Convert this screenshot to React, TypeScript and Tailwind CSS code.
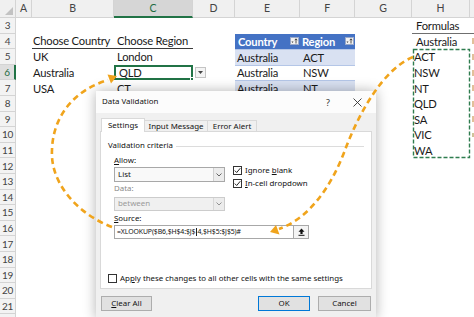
import React from 'react';

const W = ['w-[16px]', 'w-[16px]', 'w-[82px]', 'w-[79px]', 'w-[42px]', 'w-[65px]', 'w-[55px]', 'w-[57px]', 'w-[58px]', 'w-[10px]'];
const LETTERS = ['', 'A', 'B', 'C', 'D', 'E', 'F', 'G', 'H', ''];
const H_LIST: Record<number, string> = { 4: 'Australia', 5: 'ACT', 6: 'NSW', 7: 'NT', 8: 'QLD', 9: 'SA', 10: 'VIC', 11: 'WA' };
const ROWS = [3, 4, 5, 6, 7, 8, 9, 10, 11, 12, 13, 14, 15, 16, 17, 18, 19, 20, 21, 22];

function Cell({ i, className = '', children }: { i: number; className?: string; children?: React.ReactNode }) {
  return <div className={`${W[i]} shrink-0 h-full flex items-center whitespace-nowrap overflow-visible ${className}`}>{children}</div>;
}

function FilterBtn() {
  return (
    <div className="w-[9px] h-[8px] bg-[#f2f2f2] border border-[#9aa9c9] flex items-center justify-center">
      <svg width="7" height="6" viewBox="0 0 7 6">
        <path d="M0.5 3.5 L2.5 3.5 L1.5 5 Z" fill="#3a3a3a" />
        <path d="M5 5.5 L5 1 M3.8 2.2 L5 0.8 L6.2 2.2" stroke="#3a3a3a" strokeWidth="0.9" fill="none" />
      </svg>
    </div>
  );
}

function sheetRow(n: number) {
  const band = n === 5 || n === 7;
  const tableCell = band ? 'bg-[#d9e1f2] border-t border-[#b4c6e7]' : 'bg-white border-t border-[#b4c6e7]';
  return (
    <div key={n} className="flex h-[15.6px]">
      <div
        className={`${W[0]} shrink-0 h-full flex items-center justify-center text-[10px] border-b border-[#d4d4d4] ${
          n === 6 ? 'bg-[#dedede] text-[#1e6b3f] border-r-2 border-r-[#217346]' : 'bg-[#f3f3f3] text-[#444] border-r border-r-[#d4d4d4]'
        }`}
      >
        {n < 22 ? n : ''}
      </div>
      <Cell i={1} />
      <Cell i={2} className={`pl-[1px] ${n === 4 ? 'border-b border-[#3a3a3a]' : ''}`}>
        {n === 4 && 'Choose Country'}
        {n === 5 && 'UK'}
        {n === 6 && 'Australia'}
        {n === 7 && 'USA'}
      </Cell>
      <Cell
        i={3}
        className={`pl-[3px] relative ${n === 4 ? 'border-b border-[#3a3a3a]' : ''} ${
          n === 6 ? 'border-2 border-[#217346] pl-[1px]' : ''
        }`}
      >
        {n === 4 && 'Choose Region'}
        {n === 5 && 'London'}
        {n === 6 && 'QLD'}
        {n === 7 && 'CT'}
        {n === 6 && <div className="absolute right-[-3px] bottom-[-3px] w-[4px] h-[4px] bg-[#217346] border border-white" />}
      </Cell>
      <Cell i={4}>
        {n === 6 && (
          <div className="ml-[2px] w-[11px] h-[11px] bg-[#f4f4f4] border border-[#c4c4c4] flex items-center justify-center">
            <svg width="5" height="3" viewBox="0 0 5 3">
              <path d="M0 0 L5 0 L2.5 3 Z" fill="#444" />
            </svg>
          </div>
        )}
      </Cell>
      {n === 4 ? (
        <>
          <Cell i={5} className="bg-[#4472c4] text-white font-bold pl-[3px] pr-[1px] justify-between">
            <span>Country</span>
            <FilterBtn />
          </Cell>
          <Cell i={6} className="bg-[#4472c4] text-white font-bold pl-[2px] pr-[1px] justify-between">
            <span>Region</span>
            <FilterBtn />
          </Cell>
        </>
      ) : n >= 5 && n <= 7 ? (
        <>
          <Cell i={5} className={`pl-[2px] ${tableCell}`}>Australia</Cell>
          <Cell i={6} className={`pl-[3px] ${tableCell}`}>{n === 5 ? 'ACT' : n === 6 ? 'NSW' : 'NT'}</Cell>
        </>
      ) : (
        <>
          <Cell i={5} />
          <Cell i={6} />
        </>
      )}
      <Cell i={7} />
      <Cell i={8} className={`${n >= 5 ? 'pl-[2px]' : 'pl-[4px]'} ${n === 3 ? 'border-b border-[#6f6f6f]' : ''}`}>
        {n === 3 ? 'Formulas' : H_LIST[n]}
      </Cell>
      <Cell i={9} className={n === 3 ? 'border-b border-[#6f6f6f]' : ''}>
        {n >= 4 && n <= 9 && <div className="ml-[2px] w-[3px] h-[6px] bg-[#e2c09a]" />}
        {n === 10 && <div className="ml-[2px] w-[2px] h-[4px] bg-[#cfc39a]" />}
      </Cell>
    </div>
  );
}

function Sheet() {
  return (
    <div className="font-['Lato',sans-serif] text-[11.2px] tracking-[-0.2px] text-[#1a1a1a] leading-none">
      <div className="flex h-[18px]">
        {LETTERS.map((l, i) => (
          <div
            key={i}
            className={`${W[i]} shrink-0 h-full flex items-center justify-center text-[10.5px] border-r border-[#d4d4d4] ${
              i === 3
                ? 'bg-[#d6d6d6] text-[#1e6b3f] border-b-2 border-b-[#217346]'
                : 'bg-[#f0f0f0] text-[#444] border-b border-b-[#d4d4d4]'
            } ${i === 0 ? 'relative' : ''}`}
          >
            {i === 0 ? (
              <svg className="absolute right-[2px] bottom-[2px]" width="8" height="8" viewBox="0 0 8 8">
                <path d="M8 0 L8 8 L0 8 Z" fill="#c2c2c2" />
              </svg>
            ) : (
              l
            )}
          </div>
        ))}
      </div>
      {ROWS.map((n) => sheetRow(n))}
    </div>
  );
}

function Check({ on }: { on: boolean }) {
  return (
    <div className="w-[9px] h-[9px] border border-[#333] bg-white flex items-center justify-center shrink-0">
      {on && (
        <svg width="7" height="7" viewBox="0 0 7 7">
          <path d="M0.8 3.6 L2.7 5.5 L6.3 1.2" stroke="#222" strokeWidth="1" fill="none" />
        </svg>
      )}
    </div>
  );
}

function Chevron({ color = '#555' }: { color?: string }) {
  return (
    <svg width="6" height="4" viewBox="0 0 6 4">
      <path d="M0.5 0.5 L3 3 L5.5 0.5" stroke={color} strokeWidth="0.9" fill="none" />
    </svg>
  );
}

function Dialog() {
  return (
    <div className="absolute left-[96px] top-[91px] w-[280px] h-[228px] bg-[#f0f0f0] shadow-[0_0_12px_rgba(0,0,0,0.3)] font-['Noto_Sans',sans-serif] text-[7.9px] text-[#111] leading-none flex flex-col">
      <div className="h-[22px] bg-[#fcfcfc] flex items-center pl-[6px] shrink-0">
        <span>Data Validation</span>
        <span className="ml-auto text-[9px] text-[#333]">?</span>
        <svg className="ml-[23px] mr-[14px]" width="9" height="9" viewBox="0 0 9 9">
          <path d="M0.5 0.5 L8.5 8.5 M8.5 0.5 L0.5 8.5" stroke="#333" strokeWidth="0.9" />
        </svg>
      </div>
      <div className="mt-[5px] mx-[4px] flex items-end relative z-10 pl-[1px] h-[14px]">
        <div className="w-[44px] h-[14px] bg-white border border-b-0 border-[#d9d9d9] flex items-center justify-center">Settings</div>
        <div className="w-[63px] h-[12px] border border-l-0 border-b-0 border-[#d9d9d9] flex items-center justify-center">Input Message</div>
        <div className="w-[49px] h-[12px] border border-l-0 border-b-0 border-[#d9d9d9] flex items-center justify-center">Error Alert</div>
      </div>
      <div className="mx-[4px] -mt-px h-[158px] bg-white border border-[#d9d9d9] pt-[8px] px-[7px] flex flex-col">
        <div className="h-[12px] flex items-center gap-[3px]">
          <span>Validation criteria</span>
          <div className="flex-1 h-px bg-[#dcdcdc]" />
        </div>
        <div className="pl-[6px] flex">
          <div className="w-[111px] flex flex-col">
            <div className="h-[11px] mt-[3px] flex items-center">
              <span className="underline underline-offset-1">A</span>llow:
            </div>
            <div className="mt-[1px] h-[15px] bg-[#f9f9f9] border border-[#a8a8a8] flex items-center">
              <span className="pl-[3px] flex-1">List</span>
              <div className="w-[11px] h-full border-l border-[#d0d0d0] bg-[#ececec] flex items-center justify-center">
                <Chevron />
              </div>
            </div>
            <div className="h-[11px] mt-[1px] flex items-center text-[#8a8a8a]">Data:</div>
            <div className="mt-[3px] h-[14px] bg-[#f0f0f0] border border-[#cccccc] flex items-center text-[#9a9a9a]">
              <span className="pl-[3px] flex-1">between</span>
              <div className="w-[11px] h-full border-l border-[#d8d8d8] bg-[#ececec] flex items-center justify-center">
                <Chevron color="#888" />
              </div>
            </div>
          </div>
          <div className="ml-[8px] pt-[12px] flex flex-col">
            <div className="h-[13px] flex items-center gap-[3px]">
              <Check on />
              <span>
                Ignore <span className="underline underline-offset-1">b</span>lank
              </span>
            </div>
            <div className="h-[13px] flex items-center gap-[3px]">
              <Check on />
              <span>
                <span className="underline underline-offset-1">I</span>n-cell dropdown
              </span>
            </div>
          </div>
        </div>
        <div className="pl-[6px] h-[11px] mt-[2px] flex items-center">
          <span className="underline underline-offset-1">S</span>ource:
        </div>
        <div className="pl-[6px] mt-[1px] h-[14px] flex">
          <div className="w-[180px] h-full bg-white border border-[#a8a8a8] flex items-center pl-[2px] text-[6.9px] tracking-[-0.1px]">
            =XLOOKUP($B6,$H$4:$J$
            <span className="inline-block w-px h-[8px] bg-[#222] mx-[0.5px]" />
            4,$H$5:$J$5)#
          </div>
          <div className="w-[15px] h-full bg-[#f4f4f4] border border-l-0 border-[#a8a8a8] flex items-center justify-center">
            <svg width="7" height="8" viewBox="0 0 7 8">
              <path d="M3.5 0.5 L6.5 3.8 L4.6 3.8 L4.6 6 L2.4 6 L2.4 3.8 L0.5 3.8 Z" fill="#111" />
              <rect x="0.5" y="6.8" width="6" height="1" fill="#111" />
            </svg>
          </div>
        </div>
        <div className="mt-[34px] h-[11px] flex items-center gap-[3px]">
          <Check on={false} />
          <span>
            Ap<span className="underline underline-offset-1">p</span>ly these changes to all other cells with the same settings
          </span>
        </div>
      </div>
      <div className="mt-[7px] h-[15px] flex px-[5px]">
        <div className="w-[51px] h-full bg-[#e1e1e1] border border-[#adadad] flex items-center justify-center">
          <span className="underline underline-offset-1">C</span>lear All
        </div>
        <div className="ml-auto w-[52px] h-full bg-[#e1e1e1] border border-[#0078d7] flex items-center justify-center">OK</div>
        <div className="ml-[8px] w-[53px] h-full bg-[#e1e1e1] border border-[#adadad] flex items-center justify-center">Cancel</div>
      </div>
    </div>
  );
}

function Overlay() {
  const orange = '#f0a41c';
  return (
    <svg className="absolute left-0 top-0 pointer-events-none" width="474" height="317" viewBox="0 0 474 317">
      <rect x="413.5" y="49.5" width="56" height="108" fill="none" stroke="#2f7d4f" strokeWidth="1.4" strokeDasharray="4 2" />
      <path
        d="M112 227 C80 215 50 185 52 150 C53 115 75 90 108 80"
        fill="none"
        stroke={orange}
        strokeWidth="2.6"
        strokeDasharray="6 4"
      />
      <polygon points="117,76 111,83.5 107.5,74.5" fill={orange} />
      <path
        d="M413 57 C385 68 360 110 345 150 C332 185 310 218 279 229"
        fill="none"
        stroke={orange}
        strokeWidth="2.6"
        strokeDasharray="6 4"
      />
      <polygon points="270,232 279.5,234.5 276,225" fill={orange} />
    </svg>
  );
}

export default function App() {
  return (
    <div className="relative w-[474px] h-[317px] overflow-hidden bg-white">
      <Sheet />
      <Dialog />
      <Overlay />
    </div>
  );
}
